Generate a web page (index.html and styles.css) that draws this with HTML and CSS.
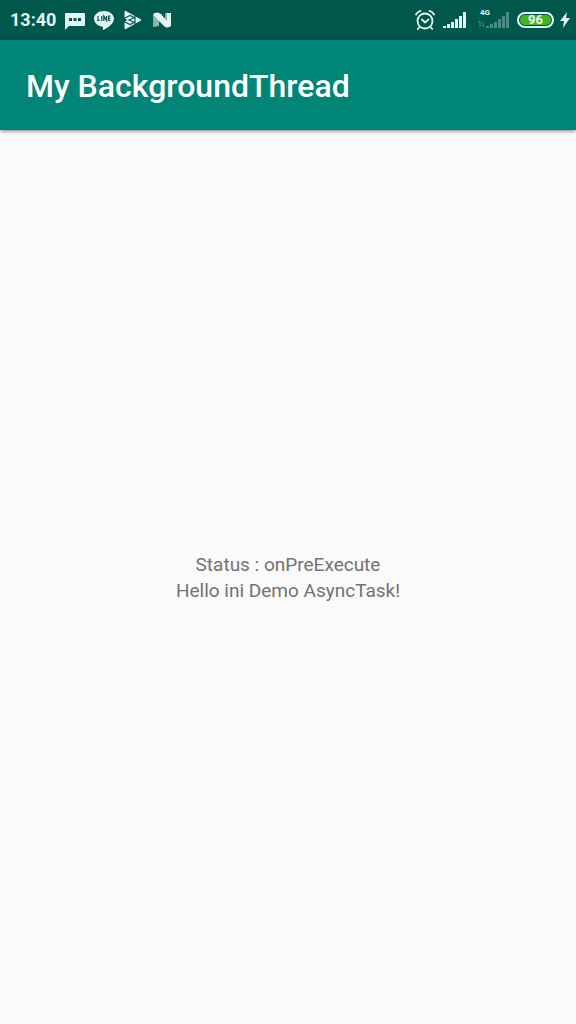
FILE: index.html
```html
<!DOCTYPE html>
<html lang="id">
<head>
<meta charset="utf-8">
<meta name="viewport" content="width=device-width, initial-scale=1">
<title>My BackgroundThread</title>
<link rel="stylesheet" href="styles.css">
</head>
<body>
<div class="status-bar">
  <div class="status-left">
    <time class="clock">13:40</time>
    <svg class="icon" width="20" height="20" viewBox="0 0 20 20" aria-hidden="true">
      <path fill="currentColor" d="M1 3H19Q20 3 20 4V15Q20 16 19 16H4L0 20V4Q0 3 1 3Z"/>
      <path class="cutout" d="M4 8h3v3H4zM8.500 8h3v3h-3zM13 8h3v3h-3z"/>
    </svg>
    <svg class="icon" width="20" height="20" viewBox="0 0 20 20" aria-hidden="true">
      <path fill="currentColor" d="M10 1C4.500 1 0 4.500 0 8.800c0 4 3.500 7.200 8.300 7.900.9.200.8.700.6 2.300 0 .8.300 1.100 1.100.7C13.500 17.900 20 13.700 20 8.800 20 4.500 15.500 1 10 1Z"/>
      <path class="cutline" d="M4 6v4.500h2M7.800 6v5M9.800 11V6l2.700 4.500V6M16.500 6.200h-2v4.300h2M14.500 8.400h2"/>
    </svg>
    <svg class="icon" width="20" height="20" viewBox="-1 0 20 20" aria-hidden="true">
      <path fill="currentColor" stroke="currentColor" stroke-linejoin="round" d="M1 1L17 10L1 19V12L4 10L1 8Z"/>
      <path class="cutline" d="M0 8.500L6 5.500L11 8M0 11.500L6 14.500L11 12M11 5.500V14.500M10.500 7.500L5 10L10.500 12.500"/>
    </svg>
    <svg class="icon" width="20" height="20" viewBox="-1 0 20 20" aria-hidden="true">
      <path fill="currentColor" opacity=".6" d="M0 4L6 3V16L0 17ZM12 3L18 3V16L12 16Z"/>
      <path fill="currentColor" d="M0 4Q4 1 8 4L14 11V3L18 3V16Q14 19 11 16L4 9Z"/>
    </svg>
  </div>
  <div class="status-right">
    <svg class="icon" width="20" height="22" viewBox="0 0 20 22" aria-hidden="true">
      <g fill="none" stroke="currentColor" stroke-width="1.800" stroke-linecap="round" stroke-linejoin="round">
        <circle cx="10" cy="12" r="7.500"/>
        <path d="M1 5.500Q2.500 2.500 5.500 1.800M19 5.500Q17.500 2.500 14.500 1.800M7 10.500L10 13.500L13.500 10.500M4 18.500L2.800 20M16 18.500L17.200 20"/>
      </g>
    </svg>
    <svg class="icon" width="23" height="16" viewBox="0 0 23 16" aria-hidden="true">
      <path fill="currentColor" d="M0 14h3v2H0zM4 12h3v4H4zM8 10h3v6H8zM12 7h3v9h-3zM16 4h3v12h-3zM20 0h3v16h-3z"/>
    </svg>
    <div class="mobile">
      <span class="network">4G</span>
      <svg class="weak" width="31" height="16" viewBox="0 0 31 16" aria-hidden="true">
        <path fill="none" stroke="currentColor" d="M2 15V9M.500 11L2 9M5 9v6M5 15l1.500-2"/>
        <path fill="currentColor" d="M8 14h3v2H8zM12 12h3v4h-3zM16 10h3v6h-3zM20 7h3v9h-3zM24 4h3v12h-3zM28 0h3v16h-3z"/>
      </svg>
    </div>
    <div class="battery"><span class="charge">96</span></div>
    <svg class="bolt" width="10" height="16" viewBox="0 0 10 16" aria-hidden="true">
      <path fill="currentColor" d="M7 0L0 9H4L3 16L10 6H6Z"/>
    </svg>
  </div>
</div>
<header class="app-bar">
  <h1 class="title">My BackgroundThread</h1>
</header>
<main class="content">
  <p class="line">Status : onPreExecute</p>
  <p class="line">Hello ini Demo AsyncTask!</p>
</main>
</body>
</html>
```
FILE: styles.css
```css
* { box-sizing: border-box; }
body {
  display: flex;
  flex-direction: column;
  min-height: 100vh;
  margin: 0;
  background: #fafafa;
  font-family: Roboto, "Noto Sans", sans-serif;
}
.status-bar {
  display: flex;
  justify-content: space-between;
  align-items: center;
  height: 40px;
  padding: 0 6px 0 10px;
  background: #00574b;
  color: #e4f4f0;
}
.status-left {
  display: flex;
  align-items: center;
  gap: 9px;
}
.status-right {
  display: flex;
  align-items: center;
  gap: 8px;
}
.clock {
  font-size: 18px;
  line-height: 20px;
  font-weight: 700;
}
.icon { flex: none; }
.bolt {
  flex: none;
  margin-left: -2px;
}
.cutout { fill: #00574b; }
.cutline {
  fill: none;
  stroke: #00574b;
  stroke-width: 1.2;
}
.mobile {
  position: relative;
  display: flex;
  margin-left: 4px;
}
.network {
  position: absolute;
  top: -4px;
  left: 2px;
  font-size: 8px;
  line-height: 10px;
  font-weight: 700;
}
.weak { color: #4b8b80; }
.battery {
  width: 37px;
  height: 16px;
  padding: 1px;
  border: 2px solid currentColor;
  border-radius: 8px;
}
.charge {
  display: block;
  height: 10px;
  border-radius: 5px;
  background: #43b51f;
  font-size: 13px;
  line-height: 10px;
  font-weight: 700;
  text-align: center;
}
.app-bar {
  display: flex;
  align-items: center;
  height: 90px;
  padding: 2px 26px 0;
  background: #008577;
  box-shadow: 0 1px 4px rgba(0, 0, 0, .5);
}
.title {
  margin: 0;
  color: #fff;
  font-size: 32px;
  line-height: 40px;
  font-weight: 500;
}
.content {
  display: flex;
  flex: 1;
  flex-direction: column;
  align-items: center;
  justify-content: center;
  padding-top: 2px;
}
.line {
  margin: 0;
  color: #737373;
  font-size: 19px;
  line-height: 26px;
}
```
